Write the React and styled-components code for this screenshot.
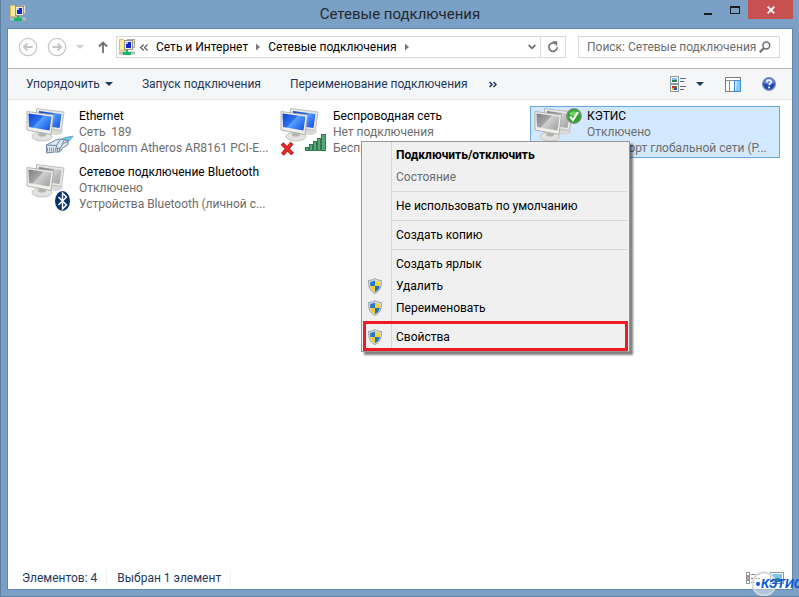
import React from 'react';
import styled, { createGlobalStyle, css } from 'styled-components';

const items = [
  {
    name: 'Ethernet',
    status: 'Сеть  189',
    device: 'Qualcomm Atheros AR8161 PCI-E...',
    badge: 'cable',
  },
  {
    name: 'Беспроводная сеть',
    status: 'Нет подключения',
    device: 'Беспроводной адаптер',
    badge: 'wifi',
  },
  {
    name: 'КЭТИС',
    status: 'Отключено',
    device: 'Мини-порт глобальной сети (P...',
    badge: 'check',
    off: true,
    selected: true,
  },
  {
    name: 'Сетевое подключение Bluetooth',
    status: 'Отключено',
    device: 'Устройства Bluetooth (личной с...',
    badge: 'bluetooth',
    off: true,
  },
];

const menu = [
  { label: 'Подключить/отключить', bold: true },
  { label: 'Состояние', disabled: true },
  null,
  { label: 'Не использовать по умолчанию' },
  null,
  { label: 'Создать копию' },
  null,
  { label: 'Создать ярлык' },
  { label: 'Удалить', shield: true },
  { label: 'Переименовать', shield: true },
  null,
  { label: 'Свойства', shield: true, marked: true },
];

/* Icons */

const FolderNetIcon = () => (
  <svg width="16" height="16" viewBox="0 0 16 16" aria-hidden="true">
    <rect x="8.5" y="0.5" width="7" height="8" fill="#e3e1d6" stroke="#a9a79e" />
    <rect x="10" y="2" width="4" height="5" fill="#8fb0e8" />
    <path d="M0.5 0.5h4l1 1h2v10h-7z" fill="#f8ea9f" stroke="#dcbc55" />
    <rect x="5.5" y="1.5" width="8" height="9" fill="#efecd8" stroke="#9a988c" />
    <rect x="7" y="3" width="5" height="6" fill="#1528c4" />
    <path d="M7 3h2v2h-2z" fill="#9dbcff" />
    <path d="M0 14h16" stroke="#b8babd" strokeWidth="3" />
    <path d="M7 11h2v2h3v3h-8v-3h3z" fill="#16b766" />
  </svg>
);

const ArrowCircle = ({ forward }) => (
  <svg width="20" height="20" viewBox="0 0 20 20" fill="none" stroke="#c6c6c6" aria-hidden="true">
    <circle cx="10" cy="10" r="8.7" strokeWidth="1.2" />
    <path
      d={forward ? 'M5.5 10h8M10.5 6.5l3.5 3.5l-3.5 3.5' : 'M14.5 10h-8M9.5 6.5l-3.5 3.5l3.5 3.5'}
      strokeWidth="2"
    />
  </svg>
);

const UpIcon = () => (
  <svg width="10" height="12" viewBox="0 0 10 12" fill="none" stroke="#6e6e6e" aria-hidden="true">
    <path d="M5 12V2M1 5.5l4-4l4 4" strokeWidth="1.8" />
  </svg>
);

const Caret = ({ color = '#1e395b' }) => (
  <svg width="8" height="4" viewBox="0 0 8 4" aria-hidden="true">
    <path d="M0 0h8l-4 4z" fill={color} />
  </svg>
);

const CrumbArrow = () => (
  <svg width="4" height="8" viewBox="0 0 4 8" aria-hidden="true">
    <path d="M0 0.5l4 3.5l-4 3.5z" fill="#7a7a7a" />
  </svg>
);

const LeftChevrons = () => (
  <svg width="8" height="7" viewBox="0 0 8 7" fill="none" stroke="#5c5c5c" aria-hidden="true">
    <path d="M3.7 0.5l-3 3l3 3M7.5 0.5l-3 3l3 3" strokeWidth="1.2" />
  </svg>
);

const RightChevrons = () => (
  <svg width="8" height="7" viewBox="0 0 8 7" fill="none" stroke="#1e395b" aria-hidden="true">
    <path d="M0.5 1l2.5 2.5l-2.5 2.5M4.5 1l2.5 2.5l-2.5 2.5" strokeWidth="1.5" />
  </svg>
);

const DownChevron = () => (
  <svg width="8" height="6" viewBox="0 0 8 6" fill="none" stroke="#707070" aria-hidden="true">
    <path d="M0.7 1l3.3 3.3l3.3-3.3" strokeWidth="1.8" />
  </svg>
);

const RefreshIcon = () => (
  <svg width="12" height="12" viewBox="0 0 12 12" fill="none" aria-hidden="true">
    <path d="M8.2 2.6A4.2 4.2 0 1 0 10.2 6.3" stroke="#757575" strokeWidth="1.7" />
    <path d="M5.2 0.3h5v5z" fill="#757575" />
  </svg>
);

const SearchIcon = () => (
  <svg width="12" height="12" viewBox="0 0 12 12" fill="none" stroke="#6c6c6c" aria-hidden="true">
    <circle cx="7.3" cy="4.5" r="3.4" strokeWidth="1.5" />
    <path d="M4.8 7.2l-4 4" strokeWidth="2" />
  </svg>
);

const ViewIcon = () => (
  <svg width="16" height="16" viewBox="0 0 16 16" aria-hidden="true">
    <rect x="0.5" y="0.5" width="8" height="7" fill="#fff" stroke="#8b9aa8" />
    <rect x="2" y="2" width="5" height="2" fill="#7cc4ee" />
    <rect x="2" y="4" width="5" height="2" fill="#2d7f55" />
    <rect x="0.5" y="8.5" width="8" height="7" fill="#fff" stroke="#8b9aa8" />
    <rect x="2" y="10" width="3" height="2" fill="#c9302c" />
    <rect x="5" y="10" width="2" height="2" fill="#2c8a3c" />
    <rect x="2" y="12" width="2" height="2" fill="#e3b421" />
    <rect x="4" y="12" width="3" height="2" fill="#2f55b5" />
    <path d="M10 2.5h6M10 5.5h4M10 10.5h6M10 13.5h4" stroke="#5d6d7f" />
  </svg>
);

const PaneIcon = () => (
  <svg width="16" height="15" viewBox="0 0 16 15" aria-hidden="true">
    <rect x="0.5" y="0.5" width="15" height="14" fill="#fff" stroke="#7d7d7d" />
    <path d="M1 3.5h14M4.5 3v11" stroke="#8b8b8b" />
    <rect x="9.5" y="3.5" width="6" height="11" fill="#8ac8fb" stroke="#3c8fdc" />
    <path d="M10 4h2l-1 9h-1z" fill="#cfe9ff" />
  </svg>
);

const HelpIcon = () => (
  <svg width="14" height="14" viewBox="0 0 14 14" aria-hidden="true">
    <circle cx="7" cy="7" r="6.4" fill="#2547b4" stroke="#8693b5" strokeWidth="1.2" />
    <path d="M1.8 6a5.3 5.3 0 0 1 10.4 0q-5 2.4-10.4 0z" fill="#6d90e4" />
    <path d="M4.8 5.3c0-3 4.6-2.8 4.4-0.3c-0.1 1.5-2 1.6-2 3.2" fill="none" stroke="#fff" strokeWidth="1.6" />
    <circle cx="7.1" cy="10.6" r="1" fill="#fff" />
  </svg>
);

const ShieldIcon = () => (
  <svg width="14" height="16" viewBox="0 0 14 16" aria-hidden="true">
    <path d="M7 0.5C5 2 3 2.4 0.7 2.4C0.3 8.5 1.8 13 7 15.5C12.2 13 13.7 8.5 13.3 2.4C11 2.4 9 2 7 0.5z" fill="#dfe3e8" stroke="#8c9298" strokeWidth="0.9" />
    <path d="M7 2.2C5.3 3.3 3.9 3.6 2.2 3.7V8H7z" fill="#2479cf" />
    <path d="M7 2.2C8.7 3.3 10.1 3.6 11.8 3.7V8H7z" fill="#f7d32e" />
    <path d="M2.2 8C2.7 11 4.2 12.8 7 14.2V8z" fill="#f5cb24" />
    <path d="M11.8 8C11.3 11 9.8 12.8 7 14.2V8z" fill="#1e6fc6" />
  </svg>
);

const badges = {
  cable: (
    <g>
      <path d="M34 32l5-2.5l8-1.5l-3 4l-6 3z" fill="#6cc8e6" stroke="#3f87a6" strokeWidth="0.6" />
      <path d="M20.5 37l9-5l5-1l8 2l-1 4l-5 3l-3 4h-5l-8 1z" fill="#dfe8f1" stroke="#5c7896" strokeWidth="0.9" />
      <path d="M20.5 37l10 0.500l1 6M30.500 37.500l4-6M31 40.500h3l3-5l5-2M34 40.500l-1 3M38 32.500l-2 3" fill="none" stroke="#5c7896" strokeWidth="0.9" />
      <path d="M21.500 39.500v4M23.500 39.500v4M25.500 39.500v4M27.500 39.500v4M29.500 39.500v3.500" stroke="#98905e" strokeWidth="0.9" />
    </g>
  ),
  wifi: (
    <g>
      <path d="M2 35.500l10.500 10.500M12 35l-9.500 11.500" stroke="#a80f0f" strokeWidth="3.8" />
      <path d="M2.500 36l9.500 9.500M11.500 35.500l-8.500 10.500" stroke="#ee2a28" strokeWidth="2.4" />
      <g fill="#56a878" stroke="#276f45" strokeWidth="0.9">
        <rect x="25.5" y="39.5" width="3" height="3" />
        <rect x="29.5" y="36.5" width="3" height="6" />
        <rect x="33.5" y="33.5" width="3" height="9" />
        <rect x="37.5" y="30.5" width="3" height="12" />
        <rect x="41.5" y="26.5" width="4" height="16" />
      </g>
    </g>
  ),
  check: (
    <g>
      <circle cx="40" cy="8" r="7.3" fill="#2ca52c" stroke="#85908a" strokeWidth="1.3" />
      <path d="M35 6a6 6 0 0 1 10 0q-5 4-10 0z" fill="#77cf68" />
      <path d="M36 8.5l3 3.5l5-8" fill="none" stroke="#fff" strokeWidth="2.2" />
    </g>
  ),
  bluetooth: (
    <g>
      <ellipse cx="36.5" cy="37" rx="7.5" ry="10" fill="#06316b" />
      <path d="M32.5 33l8 8l-4 4v-16l4 4l-8 8" fill="none" stroke="#fff" strokeWidth="1.5" />
    </g>
  ),
};

const ConnectionIcon = ({ off, badge }) => {
  const id = `screen-${badge}`;
  return (
    <svg width="48" height="48" viewBox="0 0 48 48" aria-hidden="true">
      <defs>
        <linearGradient id={id} x1="0" y1="0" x2="1" y2="0.7">
          <stop offset="0" stopColor={off ? '#7d7d7d' : '#0d3fd0'} />
          <stop offset="0.5" stopColor={off ? '#a8a8a8' : '#2a73f0'} />
          <stop offset="0.52" stopColor={off ? '#d0d0d0' : '#5ba0ff'} />
          <stop offset="1" stopColor={off ? '#a9a9a9' : '#1c5ee6'} />
        </linearGradient>
      </defs>
      <ellipse cx="30" cy="24" rx="7" ry="3" fill="#d9d9d7" />
      <path d="M10.5 0.5l27.5 3.5l-2.5 18.5l-25-3.5z" fill="#e8e8e6" stroke="#b2b2ae" strokeWidth="0.8" />
      <path d="M13 3l22.5 3l-2 14l-20.5-3z" fill={`url(#${id})`} />
      <path d="M14 23l6 1v5h-6z" fill="#bdbdba" />
      <ellipse cx="16" cy="28.5" rx="10" ry="4.5" fill="#e2e2e0" stroke="#bcbcb8" strokeWidth="0.8" />
      <ellipse cx="16" cy="26.5" rx="4" ry="2" fill="#b3b3b0" />
      <path d="M1 3.5l26.5 3.5l-2.5 19.5l-24-4.5z" fill="#efefed" stroke="#a3a39f" strokeWidth="0.8" />
      <path d="M2.5 5.5l23 3l-2 14l-20.5-3.5z" fill={`url(#${id})`} />
      {badges[badge]}
    </svg>
  );
};

const DetailsIcon = () => (
  <svg width="14" height="13" viewBox="0 0 14 13" aria-hidden="true">
    <g fill="#fff" stroke="#8d969f">
      <rect x="0.5" y="0.5" width="3" height="3" />
      <rect x="0.5" y="4.5" width="3" height="3" />
      <rect x="0.5" y="8.5" width="3" height="3" />
    </g>
    <path d="M5 2.5h4M10 2.5h4M5 6.5h4M10 6.5h4M5 10.5h4M10 10.5h4" stroke="#76818b" />
    <path d="M1 6h2" stroke="#c33" />
  </svg>
);

const ThumbIcon = () => (
  <svg width="14" height="13" viewBox="0 0 14 13" aria-hidden="true">
    <rect x="0.5" y="0.5" width="13" height="11" fill="#fff" stroke="#8d969f" />
    <rect x="2" y="2" width="10" height="8" fill="#7fc3f0" />
    <path d="M2 8q5-4 10 0v2H2z" fill="#2f8a72" />
  </svg>
);

const LogoRing = () => (
  <svg width="26" height="26" viewBox="0 0 26 26" fill="none" aria-hidden="true">
    <circle cx="13" cy="13" r="11.5" fill="#fff" fillOpacity="0.4" stroke="#d3d8df" strokeWidth="1.8" />
    <circle cx="7" cy="13" r="2" fill="#0a5bd8" />
  </svg>
);

const App = () => {
  return (
    <Frame>
      <GlobalStyle />
      <TitleBar>
        <TitleIcon>
          <FolderNetIcon />
        </TitleIcon>
        <Title>Сетевые подключения</Title>
        <WindowButtons>
          <WindowButton aria-label="Свернуть">
            <svg width="8" height="11" viewBox="0 0 8 11">
              <path d="M0 9h8v3H0z" fill="#1c1c1c" />
            </svg>
          </WindowButton>
          <WindowButton aria-label="Развернуть">
            <svg width="10" height="8" viewBox="0 0 10 8">
              <path d="M0 0h10v8H0zM1 2v5h8V2z" fill="#1c1c1c" fillRule="evenodd" />
            </svg>
          </WindowButton>
          <WindowButton $close aria-label="Закрыть">
            <svg width="8" height="8" viewBox="0 0 8 8">
              <path d="M0.7 0.7l6.6 6.6M7.3 0.7l-6.6 6.6" stroke="#fff" strokeWidth="1.8" />
            </svg>
          </WindowButton>
        </WindowButtons>
      </TitleBar>

      <Body>
        <NavBar>
          <NavButtons>
            <IconButton aria-label="Назад"><ArrowCircle /></IconButton>
            <IconButton aria-label="Вперед"><ArrowCircle forward /></IconButton>
            <HistoryButton aria-label="Журнал"><Caret color="#cfcfcf" /></HistoryButton>
            <IconButton aria-label="Вверх"><UpIcon /></IconButton>
          </NavButtons>
          <Address>
            <Crumbs>
              <CrumbRoot>
                <FolderNetIcon />
                <LeftChevrons />
              </CrumbRoot>
              <Crumb href="#internet">Сеть и Интернет</Crumb>
              <CrumbArrow />
              <Crumb href="#connections">Сетевые подключения</Crumb>
              <CrumbArrow />
            </Crumbs>
            <IconButton aria-label="Предыдущие расположения"><DownChevron /></IconButton>
            <RefreshButton aria-label="Обновить"><RefreshIcon /></RefreshButton>
          </Address>
          <Search>
            <SearchInput aria-label="Поиск" placeholder="Поиск: Сетевые подключения" />
            <SearchIcon />
          </Search>
        </NavBar>

        <Toolbar>
          <Commands>
            <Command>Упорядочить <Caret /></Command>
            <Command>Запуск подключения</Command>
            <Command>Переименование подключения</Command>
          </Commands>
          <MoreButton aria-label="Другие команды"><RightChevrons /></MoreButton>
          <ToolIcons>
            <ViewButton aria-label="Изменить представление"><ViewIcon /><Caret /></ViewButton>
            <IconButton aria-label="Область просмотра"><PaneIcon /></IconButton>
            <IconButton aria-label="Справка"><HelpIcon /></IconButton>
          </ToolIcons>
        </Toolbar>

        <Connections>
          {items.map((item) => (
            <Connection key={item.name} $selected={item.selected} aria-pressed={!!item.selected}>
              <ConnectionIcon off={item.off} badge={item.badge} />
              <ConnectionText>
                <Name>{item.name}</Name>
                <Detail>{item.status}</Detail>
                <Detail>{item.device}</Detail>
              </ConnectionText>
            </Connection>
          ))}
        </Connections>

        <StatusBar>
          <StatusCell>Элементов: 4</StatusCell>
          <StatusCell>Выбран 1 элемент</StatusCell>
          <StatusViews>
            <IconButton aria-label="Таблица"><DetailsIcon /></IconButton>
            <IconButton aria-label="Крупные значки"><ThumbIcon /></IconButton>
          </StatusViews>
        </StatusBar>
      </Body>

      <ContextMenu role="menu">
        {menu.map((entry, i) =>
          entry ? (
            <MenuItem
              key={entry.label}
              role="menuitem"
              disabled={entry.disabled}
              $bold={entry.bold}
              $marked={entry.marked}
            >
              <MenuIcon>{entry.shield && <ShieldIcon />}</MenuIcon>
              {entry.label}
            </MenuItem>
          ) : (
            <Separator key={i} />
          )
        )}
      </ContextMenu>

      <Watermark>
        <LogoRing />
        <WatermarkText>КЭТИС</WatermarkText>
      </Watermark>
    </Frame>
  );
};

// Styled Components
const GlobalStyle = createGlobalStyle`
  * {
    box-sizing: border-box;
  }

  body {
    margin: 0;
    font-family: Roboto, 'Open Sans', sans-serif;
    font-size: 12px;
    line-height: 16px;
    color: #000000;
  }

  button, input {
    font: inherit;
    color: inherit;
    border: 0;
    padding: 0;
    background: none;
  }

  svg {
    display: block;
    flex: none;
  }
`;

const Frame = styled.div`
  position: relative;
  display: flex;
  flex-direction: column;
  min-height: 100vh;
  padding: 0 6px 6px 6px;
  overflow: hidden;
  background: #7ba0c5;
  border: solid #5f7f9f;
  border-width: 0 0 1px 1px;
`;

const TitleBar = styled.header`
  display: grid;
  grid-template-columns: 1fr auto 1fr;
  height: 28px;
`;

const TitleIcon = styled.div`
  padding: 5px 3px;
`;

const Title = styled.h1`
  margin: 0;
  font-size: 15px;
  font-weight: normal;
  line-height: 28px;
  color: #23292f;
`;

const WindowButtons = styled.div`
  display: flex;
  justify-content: flex-end;
`;

const WindowButton = styled.button`
  display: flex;
  align-items: center;
  justify-content: center;
  width: ${(props) => (props.$close ? '45px' : '27px')};
  height: 19px;
  background: ${(props) => (props.$close ? '#c75050' : 'transparent')};
`;

const Body = styled.main`
  flex: 1;
  display: flex;
  flex-direction: column;
  border: 1px solid #6287ad;
  background: #ffffff;
`;

const NavBar = styled.nav`
  display: flex;
  align-items: center;
  height: 39px;
  padding: 0 12px 3px 10px;
`;

const NavButtons = styled.div`
  display: flex;
  align-items: center;
  gap: 9px;
  margin-right: 8px;
`;

const IconButton = styled.button`
  display: flex;
  align-items: center;
  justify-content: center;
`;

const HistoryButton = styled(IconButton)`
  padding-right: 5px;
`;

const Address = styled.div`
  flex: 1;
  display: flex;
  align-items: center;
  height: 22px;
  border: 1px solid #d9d9d9;
`;

const Crumbs = styled.div`
  flex: 1;
  display: flex;
  align-items: center;
  gap: 8px;
  padding-left: 2px;
`;

const CrumbRoot = styled.span`
  display: flex;
  align-items: center;
  gap: 5px;
`;

const Crumb = styled.a`
  color: #000000;
  text-decoration: none;
  white-space: nowrap;
`;

const RefreshButton = styled(IconButton)`
  width: 25px;
  height: 20px;
  margin-left: 4px;
  border-left: 1px solid #d9d9d9;
`;

const Search = styled.label`
  display: flex;
  align-items: center;
  width: 202px;
  height: 22px;
  margin-left: 12px;
  padding: 0 8px;
  border: 1px solid #d9d9d9;
`;

const SearchInput = styled.input`
  flex: 1;
  min-width: 0;
  outline: none;

  &::placeholder {
    color: #6d6d6d;
    opacity: 1;
  }
`;

const Toolbar = styled.div`
  display: flex;
  align-items: center;
  height: 32px;
  padding: 0 16px 0 18px;
  background: #f5f6f7;
  border-top: 1px solid #b4b4b4;
  border-bottom: 1px solid #e4e6e9;
  color: #1e395b;
`;

const Commands = styled.div`
  display: flex;
  align-items: center;
  gap: 29px;
`;

const Command = styled.button`
  display: flex;
  align-items: center;
  gap: 5px;
  white-space: nowrap;
`;

const MoreButton = styled(IconButton)`
  margin-left: 21px;
`;

const ToolIcons = styled.div`
  display: flex;
  align-items: center;
  gap: 21px;
  margin-left: auto;
`;

const ViewButton = styled(IconButton)`
  gap: 10px;
`;

const Connections = styled.section`
  flex: 1;
  display: grid;
  grid-template-columns: repeat(auto-fill, 250px);
  grid-auto-rows: 52px;
  gap: 4px;
  padding: 6px 0 0 14px;
`;

const Connection = styled.button`
  display: flex;
  gap: 5px;
  padding: 1px 3px;
  text-align: left;
  border: 1px solid transparent;

  ${(props) =>
    props.$selected &&
    css`
      background: #d1e8ff;
      border-color: #66a7e8;
    `}
`;

const ConnectionText = styled.span`
  display: flex;
  flex-direction: column;
  min-width: 0;
`;

const Name = styled.span`
  white-space: nowrap;
`;

const Detail = styled.span`
  color: #6d6d6d;
  white-space: pre;
`;

const StatusBar = styled.footer`
  display: flex;
  align-items: center;
  height: 22px;
  padding: 0 8px 0 14px;
  color: #1e395b;
`;

const StatusCell = styled.span`
  padding-right: 9px;
  margin-right: 10px;
  border-right: 1px solid #f0f0f0;
`;

const StatusViews = styled.div`
  display: flex;
  gap: 10px;
  margin-left: auto;
`;

const ContextMenu = styled.div`
  position: absolute;
  top: 141px;
  left: 360px;
  width: 269px;
  padding: 2px 2px 3px 0;
  background: linear-gradient(90deg, transparent 29px, #d7d7d7 29px, #d7d7d7 30px, transparent 30px) #f0f0f0;
  border: 1px solid #979797;
  box-shadow: 3px 3px 2px rgba(0, 0, 0, 0.5);
`;

const MenuItem = styled.button`
  position: relative;
  display: flex;
  align-items: center;
  gap: 13px;
  width: 100%;
  height: 22px;
  padding-left: 6px;
  font-weight: ${(props) => (props.$bold ? 'bold' : 'normal')};
  white-space: nowrap;

  &:disabled {
    color: #6d6d6d;
  }

  ${(props) =>
    props.$marked &&
    css`
      &::after {
        content: '';
        position: absolute;
        inset: -5px -1px -3px 1px;
        border: 3px solid #ed1c24;
      }
    `}
`;

const MenuIcon = styled.span`
  width: 15px;
`;

const Separator = styled.div`
  height: 7px;
  margin-left: 30px;
  background: linear-gradient(transparent 3px, #d7d7d7 3px, #d7d7d7 4px, transparent 4px);
`;

const Watermark = styled.div`
  position: absolute;
  right: -3px;
  bottom: -1px;
  display: flex;
  align-items: center;
`;

const WatermarkText = styled.span`
  margin-left: -16px;
  font-size: 13px;
  font-weight: bold;
  font-style: italic;
  color: #0a5bd8;
`;

export default App;
